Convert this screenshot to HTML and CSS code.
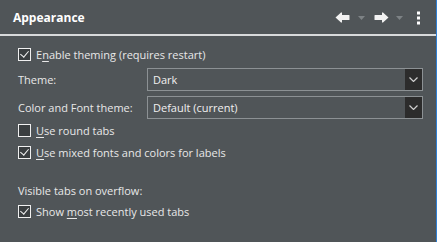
FILE: index.html
```html
<!DOCTYPE html>
<html>
<head>
<meta charset="utf-8">
<link rel="stylesheet" href="styles.css">
</head>
<body>
<div class="panel">
  <div class="header">
    <div class="title">Appearance</div>
    <div class="tools">
      <svg class="arrow back" width="15" height="11" viewBox="0 0 15 11"><path d="M0.5 5.5 L6 0.5 L7 0.5 L7 3 L14 3 Q14.5 3 14.5 3.5 L14.5 7.5 Q14.5 8 14 8 L7 8 L7 10.5 L6 10.5 Z" fill="#f2f2f2"/></svg>
      <svg class="tri t1" width="7" height="4" viewBox="0 0 7 4"><path d="M0 0 L7 0 L3.5 4 Z" fill="#7d8285"/></svg>
      <svg class="arrow fwd" width="15" height="11" viewBox="0 0 15 11"><path d="M14.5 5.5 L9 0.5 L8 0.5 L8 3 L1 3 Q0.5 3 0.5 3.5 L0.5 7.5 Q0.5 8 1 8 L8 8 L8 10.5 L9 10.5 Z" fill="#f2f2f2"/></svg>
      <svg class="tri t2" width="7" height="4" viewBox="0 0 7 4"><path d="M0 0 L7 0 L3.5 4 Z" fill="#7d8285"/></svg>
      <svg class="kebab" width="5" height="14" viewBox="0 0 5 14"><rect x="1" y="0.5" width="3" height="3" fill="#fff"/><rect x="1" y="5.5" width="3" height="3" fill="#fff"/><rect x="1" y="10.5" width="3" height="3" fill="#fff"/></svg>
    </div>
  </div>
  <div class="body">
    <label class="check"><span class="box checked"></span><span>E<u>n</u>able theming (requires restart)</span></label>
    <div class="form">
      <span class="lbl">Theme:</span>
      <div class="select"><span class="val">Dark</span><span class="drop"><svg width="9" height="5" viewBox="0 0 9 5"><path d="M0.5 0.5 L4.5 4.5 L8.5 0.5" stroke="#cfcfcf" stroke-width="1.2" fill="none"/></svg></span></div>
      <span class="lbl">Color and Font theme:</span>
      <div class="select"><span class="val">Default (current)</span><span class="drop"><svg width="9" height="5" viewBox="0 0 9 5"><path d="M0.5 0.5 L4.5 4.5 L8.5 0.5" stroke="#cfcfcf" stroke-width="1.2" fill="none"/></svg></span></div>
    </div>
    <label class="check"><span class="box"></span><span><u>U</u>se round tabs</span></label>
    <label class="check"><span class="box checked"></span><span><u>U</u>se mixed fonts and colors for labels</span></label>
    <div class="section">Visible tabs on overflow:</div>
    <label class="check"><span class="box checked"></span><span>Show <u>m</u>ost recently used tabs</span></label>
  </div>
</div>
</body>
</html>
```
FILE: styles.css
```css
html, body { margin: 0; padding: 0; }
body {
  width: 437px;
  height: 242px;
  background: #505558;
  font-family: "Open Sans", "Noto Sans", sans-serif;
  font-size: 11px;
  color: #e8e8e8;
  overflow: hidden;
}
.panel {
  height: 242px;
  border-right: 1px solid #2f7fd3;
  box-sizing: border-box;
}
.header {
  height: 36px;
  display: flex;
  align-items: center;
  justify-content: space-between;
  padding: 0 15px 0 13px;
  border-bottom: 2px solid #d8dadb;
  box-sizing: border-box;
}
.title {
  font-weight: bold;
  font-size: 12px;
  color: #ffffff;
  padding-top: 1px;
}
.tools {
  display: flex;
  align-items: center;
  padding-top: 1px;
}
.tools .t1 { margin-left: 8px; }
.tools .fwd { margin-left: 9px; }
.tools .t2 { margin-left: 7px; }
.tools .kebab { margin-left: 13px; }
.body {
  padding: 7px 13px 0 18px;
}
.check {
  display: flex;
  align-items: center;
  gap: 5px;
  height: 22px;
}
.box {
  width: 11px;
  height: 11px;
  border: 1px solid #f0f0f0;
  background: #3a3e40;
  position: relative;
  flex: none;
}
.box.checked::after {
  content: "";
  position: absolute;
  left: 3px;
  top: 0px;
  width: 4px;
  height: 7px;
  border-right: 1.5px solid #f4f4f4;
  border-bottom: 1.5px solid #f4f4f4;
  transform: rotate(40deg);
}
u { text-decoration-thickness: 1px; text-underline-offset: 2px; }
.form {
  display: grid;
  grid-template-columns: 129px 1fr;
  row-gap: 5px;
  align-items: center;
  margin: 3px 0 0 0;
}
.select {
  height: 23px;
  border: 1px solid #8c9194;
  box-sizing: border-box;
  display: flex;
  align-items: stretch;
}
.val {
  flex: 1;
  padding-left: 5px;
  display: flex;
  align-items: center;
  color: #f0f0f0;
}
.drop {
  width: 17px;
  background: #2c2c2c;
  display: flex;
  align-items: center;
  justify-content: center;
}
.section {
  margin-top: 17px;
  height: 20px;
  display: flex;
  align-items: center;
}
```
